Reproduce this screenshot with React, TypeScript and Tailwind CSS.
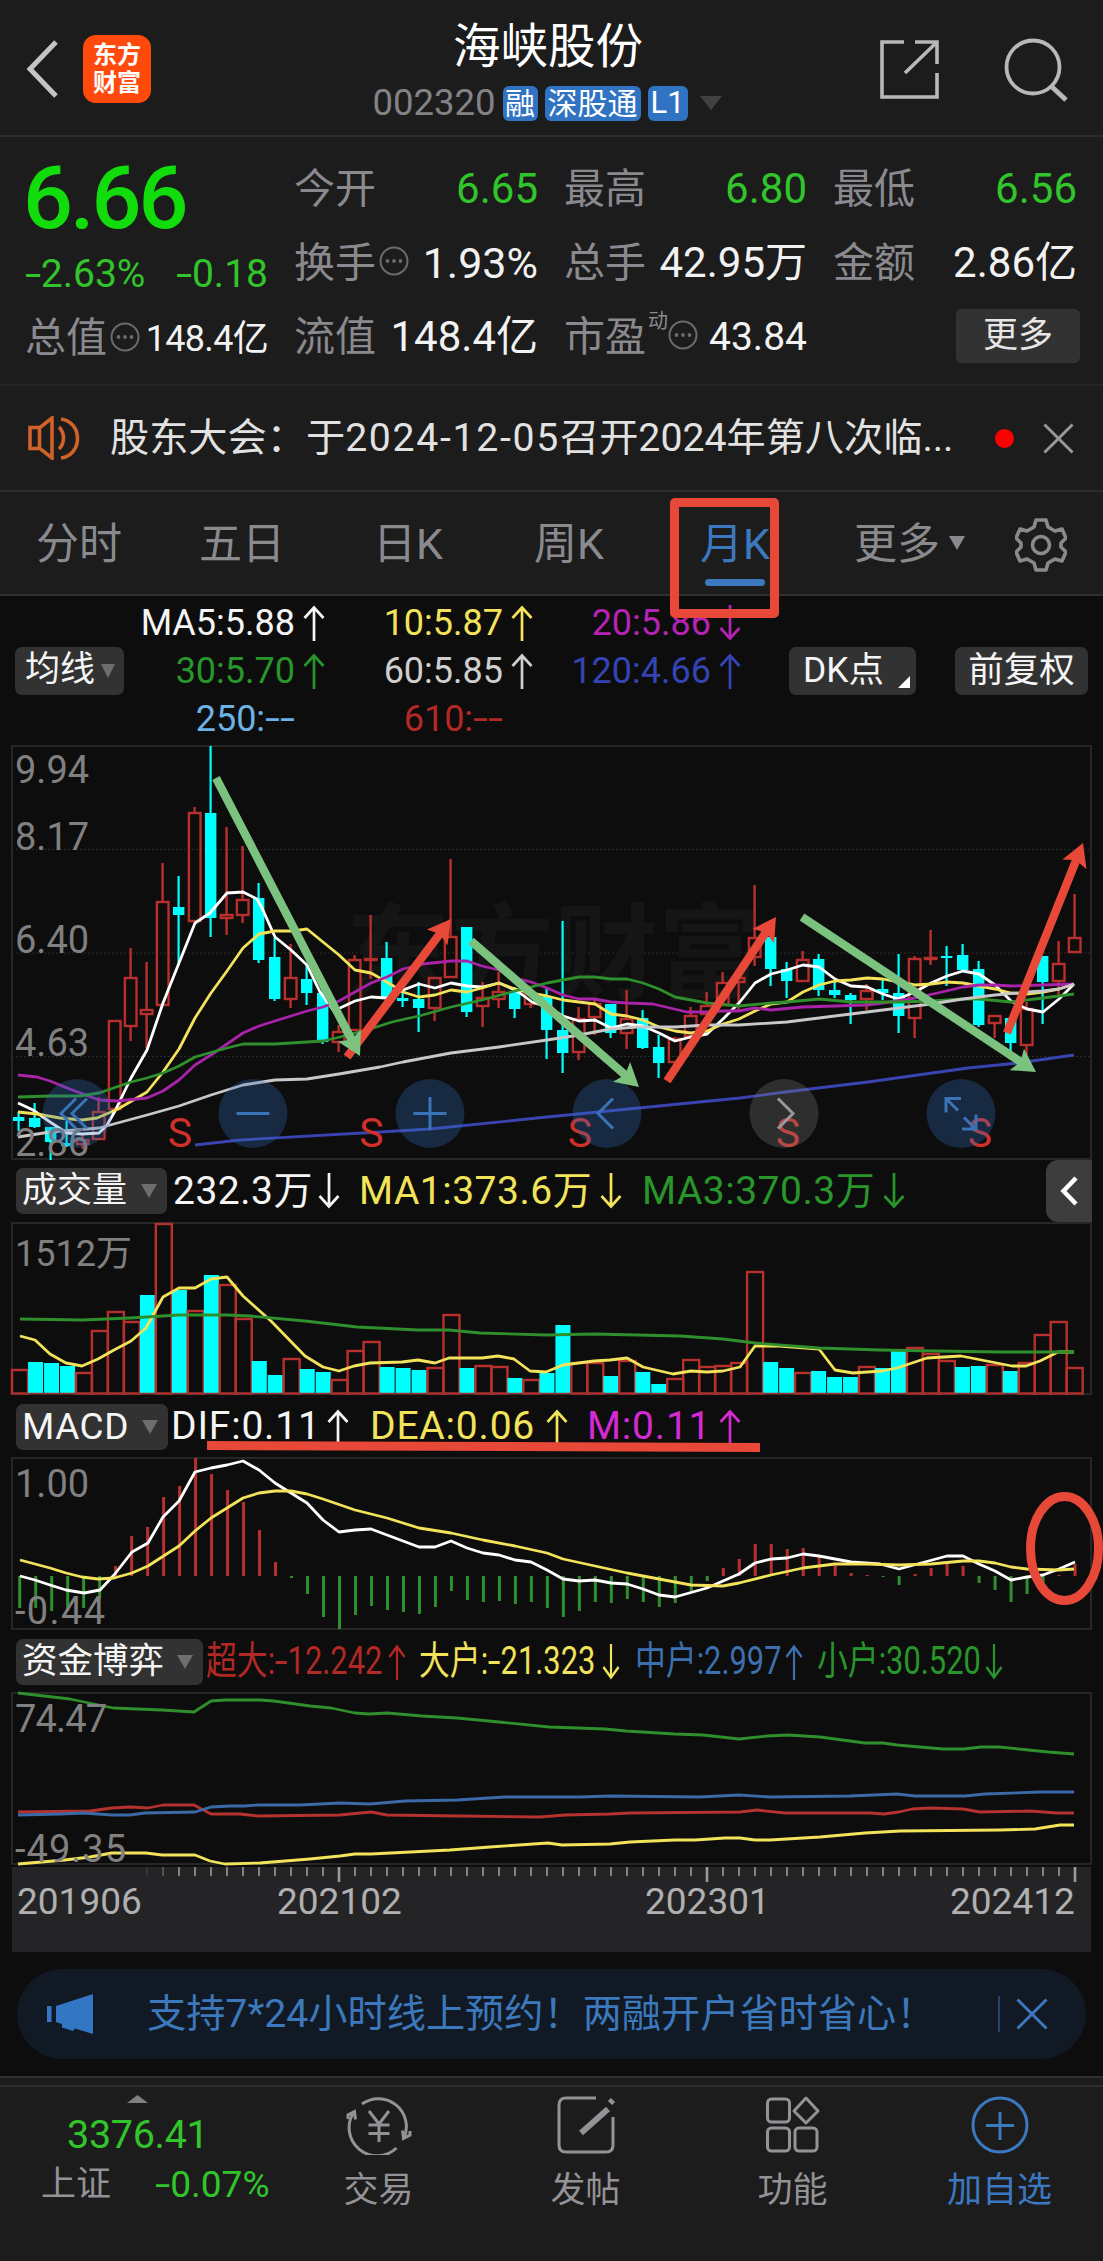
import type { ReactNode } from "react";
import { clsx } from "clsx";

// ── Chart data (y values are in page pixels) ─────────────────────────────

// [dir, high, bodyTop, bodyBottom, low]
type Candle = [1 | -1, number, number, number, number];

const CANDLES: Candle[] = [
  [-1, 1112, 1117, 1121, 1131], [-1, 1103, 1118, 1127, 1128], [-1, 1127, 1127, 1142, 1160],
  [-1, 1120, 1143, 1146, 1147], [1, 1135, 1139, 1145, 1149], [1, 1097, 1111, 1140, 1140],
  [1, 1020, 1020, 1110, 1110], [1, 948, 977, 1027, 1041], [1, 962, 1009, 1015, 1048],
  [1, 863, 901, 1006, 1006], [-1, 876, 907, 915, 965], [1, 807, 812, 922, 922],
  [-1, 746, 813, 918, 937], [1, 827, 914, 919, 935], [1, 846, 899, 916, 923],
  [-1, 883, 898, 960, 963], [-1, 938, 957, 999, 1001], [1, 944, 977, 1000, 1008],
  [-1, 965, 979, 993, 1005], [-1, 988, 993, 1042, 1044], [1, 1025, 1031, 1043, 1052],
  [1, 955, 959, 1031, 1031], [1, 915, 958, 961, 979], [-1, 942, 958, 997, 997],
  [-1, 992, 998, 1001, 1007], [-1, 982, 999, 1008, 1032], [1, 977, 977, 1009, 1021],
  [1, 859, 936, 978, 978], [-1, 927, 927, 1012, 1017], [1, 982, 997, 1007, 1027],
  [1, 972, 991, 1000, 1008], [-1, 987, 992, 1009, 1018], [1, 990, 993, 1005, 1008],
  [-1, 987, 997, 1030, 1059], [-1, 921, 1030, 1053, 1073], [1, 1007, 1018, 1053, 1060],
  [1, 1000, 1003, 1018, 1035], [-1, 1004, 1004, 1033, 1038], [1, 990, 1018, 1034, 1049],
  [-1, 1010, 1018, 1048, 1049], [-1, 1035, 1047, 1063, 1078], [1, 1037, 1038, 1063, 1063],
  [1, 1007, 1015, 1037, 1037], [1, 992, 1005, 1015, 1015], [1, 972, 982, 1006, 1006],
  [1, 975, 977, 983, 1010], [1, 885, 937, 958, 966], [-1, 937, 937, 969, 986],
  [-1, 962, 969, 981, 998], [1, 951, 959, 982, 982], [-1, 954, 959, 990, 996],
  [-1, 981, 990, 995, 998], [-1, 993, 995, 1000, 1024], [1, 984, 990, 1000, 1010],
  [-1, 979, 989, 993, 1000], [-1, 954, 993, 1016, 1033], [1, 956, 958, 1019, 1038],
  [1, 930, 957, 960, 965], [-1, 946, 956, 958, 986], [-1, 944, 955, 970, 970],
  [-1, 961, 969, 1025, 1027], [1, 1015, 1015, 1024, 1038], [-1, 1018, 1018, 1043, 1053],
  [1, 1002, 1008, 1046, 1055], [-1, 956, 956, 982, 1024], [1, 941, 963, 982, 995],
  [1, 894, 937, 953, 953],
];

const MA5 =
  "18,1103 33,1110 50,1122 67,1133 82,1134 99,1133 107,1125 115,1111 131,1078 147,1050 163,1003 179,963 195,923 210,913 227,893 243,892 257,899 262,908 275,937 291,950 307,965 320,992 333,1010 340,1008 355,1001 371,997 387,998 403,990 419,984 435,988 451,983 467,986 482,987 499,983 515,990 520,993 532,1002 547,1007 563,1016 579,1021 595,1020 611,1028 627,1024 643,1026 659,1033 675,1041 691,1037 707,1034 723,1019 739,1003 755,983 771,974 787,970 803,965 819,967 835,979 851,986 867,987 883,994 898,999 915,992 931,983 947,976 963,971 979,974 995,985 1011,1001 1027,1009 1043,1012 1059,999 1074,984";
const MA10 =
  "18,1112 37,1114 60,1118 82,1120 97,1118 118,1109 147,1092 163,1072 179,1049 195,1018 211,993 227,971 243,948 259,934 275,931 293,931 307,929 323,942 339,955 355,970 371,973 387,982 403,992 419,997 435,995 451,990 467,992 482,988 499,983 515,989 530,993 547,996 563,1000 579,1002 595,1004 611,1014 627,1016 643,1020 659,1027 675,1031 691,1033 707,1031 723,1024 739,1019 755,1011 771,1004 787,1002 803,992 819,985 835,981 851,980 867,978 883,979 898,982 915,985 931,984 947,982 963,983 979,986 995,989 1011,993 1027,994 1043,992 1059,989 1074,984";
const MA20 =
  "18,1075 37,1077 50,1081 67,1088 83,1094 99,1100 117,1101 147,1098 163,1091 179,1080 195,1065 211,1055 227,1044 243,1033 259,1026 291,1016 307,1011 323,1007 339,1001 355,992 371,983 387,977 403,969 423,964 451,961 467,961 482,966 499,970 515,978 531,982 547,988 563,995 579,999 595,999 611,1002 627,1003 653,1004 670,1008 687,1012 707,1012 723,1011 739,1011 755,1008 771,1010 803,1007 835,1006 867,1005 883,1003 915,998 942,992 963,987 979,985 995,985 1011,986 1043,985 1074,984";
const MA30 =
  "18,1097 50,1096 80,1096 99,1093 131,1082 147,1078 163,1073 179,1066 195,1057 227,1048 243,1044 275,1044 323,1041 340,1037 370,1029 392,1022 419,1016 451,1007 482,1000 515,991 547,983 579,977 595,977 611,979 627,979 643,983 659,989 675,997 691,1000 707,1003 739,1006 771,1003 787,1002 819,999 851,1002 898,1002 931,1001 963,999 979,999 1011,1002 1043,998 1074,994";
const MA60 =
  "18,1137 50,1132 99,1128 147,1115 179,1106 211,1095 243,1085 275,1080 307,1079 339,1074 380,1067 403,1062 451,1053 499,1047 547,1040 579,1035 611,1029 637,1027 675,1027 707,1025 739,1025 787,1022 819,1018 851,1014 883,1010 931,1004 963,999 995,995 1027,992 1043,991 1059,989 1074,984";
const MA120 =
  "195,1145 240,1140 380,1132 430,1129 547,1117 659,1106 740,1098 785,1092 868,1082 968,1068 1018,1063 1074,1055";

// negative = falling month
const VOLUMES = [
  24, -31, -30, -27, 21, 63, 82, 72, -98, 170, -103, 83, -118, 109, 75, -32, -18, 35, -24, -21, 14, 43, 52,
  -26, -25, -23, 26, 79, -25, 28, 27, -15, 14, -20, -68, 31, 31, -17, 33, -21, -9, 15, 34, 27, 28, 31, 122,
  -31, -25, 21, -22, -16, -16, 27, -25, -42, 46, 40, 33, -26, -27, 29, -22, 31, 59, 72, 26,
];
const VOL_MA1 =
  "20,1336 35,1340 50,1354 66,1363 82,1366 98,1359 114,1350 131,1341 146,1328 163,1297 179,1288 195,1288 211,1279 227,1277 243,1296 271,1321 305,1356 323,1367 339,1371 354,1366 370,1363 402,1362 418,1360 435,1363 449,1358 482,1358 498,1356 514,1359 530,1371 546,1372 563,1365 594,1361 610,1360 627,1358 643,1367 673,1374 691,1371 707,1372 723,1371 740,1367 755,1346 779,1346 819,1349 835,1370 853,1373 882,1371 897,1368 927,1358 961,1356 1012,1366 1026,1366 1040,1361 1058,1352 1074,1352";
const VOL_MA3 =
  "20,1319 82,1320 130,1318 179,1315 227,1315 250,1316 305,1321 357,1327 418,1330 449,1330 480,1333 546,1335 594,1334 680,1336 723,1339 755,1343 819,1348 880,1350 935,1351 1000,1352 1074,1352";

const MACD_BARS = [
  -32, -32, -35, -35, -32, -22, 10, 40, 49, 79, 90, 118, 102, 86, 74, 46, 14, -2, -18, -41, -53, -39, -30,
  -34, -36, -38, -31, -15, -24, -26, -25, -28, -26, -32, -41, -35, -26, -27, -23, -26, -31, -27, -15, -5, 8,
  17, 32, 32, 27, 28, 19, 11, 3, 1, -1, -9, 2, 8, 13, 10, -7, -14, -26, -18, -8, 1, 12,
];
const DIF =
  "20,1576 35,1580 50,1585 66,1590 84,1593 100,1590 114,1575 132,1552 148,1543 163,1517 179,1501 195,1472 211,1468 227,1465 243,1461 259,1470 275,1483 291,1493 307,1503 323,1520 339,1532 355,1530 371,1529 387,1535 403,1541 419,1547 435,1547 451,1541 467,1548 483,1553 499,1555 515,1560 531,1562 547,1570 563,1579 579,1581 595,1580 611,1583 627,1584 643,1589 659,1595 675,1597 707,1588 739,1574 755,1563 771,1559 787,1558 803,1554 819,1556 851,1562 880,1564 899,1569 947,1556 963,1556 979,1564 995,1571 1011,1580 1027,1577 1043,1575 1059,1569 1075,1562";
const DEA =
  "20,1560 35,1564 50,1568 66,1573 82,1577 98,1579 114,1578 132,1573 148,1566 179,1546 195,1531 211,1518 227,1508 243,1498 259,1493 275,1491 291,1491 307,1494 323,1499 355,1510 387,1518 419,1528 451,1533 483,1540 515,1546 547,1553 563,1559 595,1566 627,1573 659,1579 691,1585 723,1586 739,1583 771,1575 803,1568 835,1564 867,1564 899,1565 931,1564 963,1561 979,1561 995,1563 1011,1567 1027,1569 1059,1570 1074,1569";

const FUND_SMALL =
  "18,1693 70,1699 113,1708 162,1710 194,1712 211,1701 225,1700 260,1700 274,1701 310,1706 331,1708 355,1713 369,1714 387,1713 422,1716 457,1718 499,1722 549,1727 605,1729 626,1731 675,1734 703,1735 739,1739 767,1736 788,1735 820,1737 865,1743 883,1743 897,1745 943,1749 964,1749 981,1747 999,1747 1048,1752 1074,1754";
const FUND_MID =
  "18,1815 60,1814 84,1813 112,1815 130,1815 145,1813 195,1812 211,1807 230,1806 245,1806 258,1805 300,1805 340,1803 370,1804 405,1801 457,1800 505,1797 580,1797 610,1796 700,1797 739,1795 770,1797 850,1796 897,1794 915,1796 965,1796 985,1794 1040,1792 1074,1792";
const FUND_HUGE =
  "18,1812 90,1811 112,1808 130,1807 148,1808 163,1805 194,1805 211,1814 240,1814 258,1816 340,1815 371,1812 387,1815 460,1816 540,1817 565,1815 610,1814 630,1813 740,1812 757,1810 785,1813 870,1813 884,1814 899,1812 912,1809 930,1808 963,1809 980,1812 1030,1811 1057,1813 1074,1813";
const FUND_BIG =
  "18,1864 65,1860 90,1857 112,1853 146,1853 162,1855 195,1855 210,1861 225,1864 260,1863 310,1859 340,1856 355,1854 371,1854 450,1850 490,1847 548,1843 562,1845 610,1844 630,1842 675,1840 695,1840 725,1838 740,1838 755,1840 770,1840 820,1837 865,1833 900,1831 1000,1830 1035,1829 1060,1825 1074,1825";

const RED = "#b8302d";
const CYAN = "#00ffff";
const GREEN = "#2f8f2c";
const YELLOW = "#f3e35a";

// ── Small pieces ─────────────────────────────────────────────────────────

function Line({ points, color, width = 2.8 }: { points: string; color: string; width?: number }) {
  return <polyline points={points} fill="none" stroke={color} strokeWidth={width} strokeLinejoin="round" />;
}

// Roboto's hyphen is too short next to the figures, so it is stretched
function Minus() {
  return <span className="mr-[5px] inline-block origin-left scale-x-150">-</span>;
}

function Trend({ dir }: { dir: "up" | "down" }) {
  return (
    <svg
      width="22"
      height="36"
      viewBox="0 0 22 36"
      className={clsx("shrink-0", dir === "down" && "rotate-180")}
      fill="none"
      stroke="currentColor"
      strokeWidth="2.7"
    >
      <path d="M11 36V3M1.5 13 11 2.5 20.5 13" />
    </svg>
  );
}

function Caret({ className }: { className?: string }) {
  return (
    <svg width="16" height="14" viewBox="0 0 16 14" preserveAspectRatio="none" className={className} fill="currentColor">
      <path d="M0 0h16L8 14z" />
    </svg>
  );
}

function Dots() {
  return (
    <svg width="30" height="30" viewBox="0 0 30 30" className="mb-1 ml-[3px] shrink-0 text-[#6b6b6f]">
      <circle cx="15" cy="15" r="13.500" fill="none" stroke="currentColor" strokeWidth="2" />
      <g fill="currentColor">
        <circle cx="8.500" cy="15" r="1.900" />
        <circle cx="15" cy="15" r="1.900" />
        <circle cx="21.500" cy="15" r="1.900" />
      </g>
    </svg>
  );
}

function Close({ size, className }: { size: number; className?: string }) {
  return (
    <svg width={size} height={size} viewBox="0 0 32 32" className={className} stroke="currentColor" strokeWidth="3">
      <path d="M1.500 1.500l29 29M30.500 1.500l-29 29" />
    </svg>
  );
}

function Stat({ label, value, valueClass, icon, sup }: {
  label: string;
  value: string;
  valueClass: string;
  icon?: boolean;
  sup?: string;
}) {
  return (
    <div className="flex h-[52px] items-center justify-between leading-[52px]">
      <span className="flex items-center text-[41px] text-[#8a8a8e]">
        {label}
        {sup && <sup className="-mr-[3px] ml-0.5 self-start text-[20px] leading-[20px] top-0">{sup}</sup>}
        {icon && <Dots />}
      </span>
      <span className={valueClass}>{value}</span>
    </div>
  );
}

function Picker({ label, className }: { label: string; className: string }) {
  return (
    <div className={clsx("flex h-[46px] shrink-0 items-center justify-between rounded-[7px] bg-[#323232] pl-1.5 pr-2.5 text-[#f5f5f5]", className)}>
      <span>{label}</span>
      <Caret className="text-[#6e6e6e]" />
    </div>
  );
}

// ── Sections ─────────────────────────────────────────────────────────────

function Header() {
  return (
    <header className="flex h-[137px] items-start justify-between border-b-2 border-[#2c2c2c] pl-[26px] pr-[35px]">
      <div className="flex w-[340px] items-center gap-[24px] pt-[35px]">
        <svg width="33" height="58" viewBox="0 0 33 58" fill="none" stroke="#c4c4c4" strokeWidth="5">
          <path d="M30 2 4 29l26 27" />
        </svg>
        <div className="flex size-[68px] flex-col items-center justify-center rounded-[13px] bg-[#ff4a0c] text-[24px] font-bold leading-[28px] text-white">
          <span>东方</span>
          <span>财富</span>
        </div>
      </div>
      <div className="flex flex-col items-center pt-[18px]">
        <h1 className="ml-[2px] text-[47.500px] leading-[58px] text-white">海峡股份</h1>
        <div className="mt-[9px] flex items-center gap-[7px] text-white">
          <span className="text-[36.500px] leading-9 text-[#838387]">002320</span>
          <span className="flex h-[35px] w-[35px] items-center justify-center rounded-[6px] bg-[#3173c3] text-[30px]">融</span>
          <span className="flex h-[35px] w-[96px] items-center justify-center rounded-[6px] bg-[#3173c3] text-[30px]">深股通</span>
          <span className="flex h-[35px] w-[40px] items-center justify-center rounded-[6px] bg-[#3173c3] text-[31px]">L1</span>
          <Caret className="ml-[5px] w-[22px] text-[#414141]" />
        </div>
      </div>
      <div className="flex w-[340px] justify-end gap-[63px] pt-[38px] text-[#b8b8b8]">
        <svg width="62" height="62" viewBox="0 0 62 62" fill="none" stroke="currentColor" strokeWidth="3.600">
          <path d="M25 4H3v55h55V35M36 4h22v22M58 4 26 35" />
        </svg>
        <svg width="64" height="66" viewBox="0 0 64 66" fill="none" stroke="currentColor" strokeWidth="3.800">
          <circle cx="29" cy="29" r="26.500" />
          <path d="m47 48 15 14" strokeWidth="5" />
        </svg>
      </div>
    </header>
  );
}

function Quote() {
  const green = "text-[42px] text-[#32c52b]";
  const white = "text-[42px] text-[#f2f2f2]";
  return (
    <section className="grid h-[249px] grid-cols-[243px_244px_243px_244px] gap-x-[26px] border-b-2 border-[#252525] pl-[25px]">
      <div className="flex flex-col">
        <div className="-ml-[2px] mt-[18px] h-[86px] text-[88px] font-medium leading-[86px] tracking-[-3px] text-[#12dc0c]">6.66</div>
        <div className="mt-[9px] flex h-[48px] items-center justify-between text-[39px] text-[#32c52b]">
          <span><Minus />2.63%</span>
          <span><Minus />0.18</span>
        </div>
        <div className="mt-[15px] flex h-[52px] items-center justify-between">
          <span className="flex items-center text-[41px] text-[#8a8a8e]">总值<Dots /></span>
          <span className="text-[36px] tracking-[-0.700px] text-[#f2f2f2]">148.4亿</span>
        </div>
      </div>
      <div className="flex flex-col gap-[22px] pt-[26px]">
        <Stat label="今开" value="6.65" valueClass={green} />
        <Stat label="换手" value="1.93%" valueClass="text-[43px] text-[#f2f2f2]" icon />
        <Stat label="流值" value="148.4亿" valueClass={white} />
      </div>
      <div className="flex flex-col gap-[22px] pt-[26px]">
        <Stat label="最高" value="6.80" valueClass={green} />
        <Stat label="总手" value="42.95万" valueClass={white} />
        <Stat label="市盈" value="43.84" valueClass="text-[39px] text-[#f2f2f2]" icon sup="动" />
      </div>
      <div className="flex flex-col gap-[22px] pt-[26px]">
        <Stat label="最低" value="6.56" valueClass={green} />
        <Stat label="金额" value="2.86亿" valueClass={white} />
        <button className="-mr-[3px] -mt-[2px] h-[54px] w-[124px] self-end rounded-[6px] bg-[#323232] text-[35px] leading-[52px] text-[#e6e6e6]">更多</button>
      </div>
    </section>
  );
}

function Notice() {
  return (
    <section className="flex h-[106px] items-center border-b-2 border-[#2c2c2c] pl-[28px] pr-[29px]">
      <svg width="52" height="44" viewBox="0 0 52 44" fill="none" stroke="#d0622a" strokeWidth="3.600">
        <path d="M2 11.500h10L24 2v40L12 32.500H2zM11.500 12v20M31 11c6 6 6 16 0 22M33 3c22 3 22 36 0 39" />
      </svg>
      <p className="ml-[30px] w-[855px] whitespace-nowrap text-[39.200px] text-[#e2e2e2]">
        股东大会：于<span className="tracking-[1.700px]">2024-12-05</span>召开2024年第八次临...
      </p>
      <span className="ml-auto size-[19px] rounded-full bg-[#fb0101]" />
      <Close size={31} className="ml-[29px] text-[#98989c]" />
    </section>
  );
}

function Gear() {
  return (
    <svg width="52" height="54" viewBox="0 0 52 54" fill="none" stroke="#8a8a8e" strokeWidth="3.600" strokeLinejoin="round">
      <path d="M21 2h10l2 7 7 4 7-2 4 9-5 5v4l5 5-4 9-7-2-7 4-2 7H21l-2-7-7-4-7 2-4-9 5-5v-4l-5-5 4-9 7 2 7-4z" />
      <circle cx="26" cy="27" r="8.500" />
    </svg>
  );
}

function Tabs() {
  return (
    <nav className="relative flex h-[104px] items-center border-b-2 border-[#303030] pl-[36px] pt-[3px] text-[43px] text-[#8a8a8e]">
      <span className="w-[163px]">分时</span>
      <span className="w-[174px]">五日</span>
      <span className="w-[161px]">日K</span>
      <span className="w-[166px]">周K</span>
      <span className="relative w-[154px] text-[#3c78c0]">
        月K
        <i className="absolute -bottom-[9px] left-[5px] h-[7px] w-[60px] rounded-full bg-[#3c78c0]" />
      </span>
      <span className="flex w-[161px] items-center gap-[9px]">
        更多
        <Caret className="mb-1" />
      </span>
      <Gear />
      {/* highlight frame round the active tab */}
      <div className="absolute left-[670px] top-[6px] z-10 h-[120px] w-[109px] rounded-[5px] border-9 border-[#e84838]" />
    </nav>
  );
}

function Ma({ color, children, dir }: { color: string; children: ReactNode; dir?: "up" | "down" }) {
  return (
    <div className={clsx("flex h-[48px] items-center justify-end gap-[8px]", color)}>
      <span>{children}</span>
      {dir ? <Trend dir={dir} /> : <span className="w-[22px]" />}
    </div>
  );
}

function MaBar() {
  return (
    <section className="flex h-[149px] items-center pl-[15px] pr-[15px] text-[36px]">
      <div className="flex h-[48px] w-[109px] items-center justify-between rounded-[7px] bg-[#323232] pl-[10px] pr-[9px] text-[35px] text-[#f5f5f5]">
        均线
        <Caret className="w-[14px] text-[#6e6e6e]" />
      </div>
      <div className="grid w-[617px] grid-cols-[201px_208px_208px]">
        <Ma color="text-[#f5f5f5]" dir="up">MA5:5.88</Ma>
        <Ma color="text-[#f3e35a]" dir="up">10:5.87</Ma>
        <Ma color="text-[#b623b4]" dir="down">20:5.86</Ma>
        <Ma color="text-[#28962a]" dir="up">30:5.70</Ma>
        <Ma color="text-[#cfcfcf]" dir="up">60:5.85</Ma>
        <Ma color="text-[#3444b4]" dir="up">120:4.66</Ma>
        <Ma color="text-[#6cb2e4]">250:<Minus /><Minus /></Ma>
        <Ma color="text-[#b22824]">610:<Minus /><Minus /></Ma>
      </div>
      <div className="relative ml-auto flex h-[48px] w-[127px] items-center rounded-[7px] bg-[#323232] pl-[14px] text-[35.500px] text-[#f5f5f5]">
        DK点
        <svg width="12" height="12" viewBox="0 0 12 12" className="absolute bottom-[7px] right-[6px]">
          <path d="M12 0v12H0z" fill="#fff" />
        </svg>
      </div>
      <div className="ml-[39px] flex h-[48px] w-[133px] items-center justify-center rounded-[7px] bg-[#323232] text-[35.500px] text-[#f5f5f5]">
        前复权
      </div>
    </section>
  );
}

const ARROWS = [
  { from: [347, 1057], to: [451, 919], color: "#e84838" },
  { from: [216, 778], to: [360, 1056], color: "#7bc27f" },
  { from: [471, 941], to: [639, 1087], color: "#7bc27f" },
  { from: [667, 1081], to: [776, 917], color: "#e84838" },
  { from: [802, 917], to: [1036, 1072], color: "#7bc27f" },
  { from: [1007, 1033], to: [1083, 843], color: "#e84838" },
];

function Arrow({ from, to, color }: { from: number[]; to: number[]; color: string }) {
  const dx = to[0] - from[0];
  const dy = to[1] - from[1];
  const len = Math.hypot(dx, dy);
  const angle = (Math.atan2(dy, dx) * 180) / Math.PI;
  return (
    <path
      d={`M0 -4.200H${len - 20}L${len - 23} -13L${len} 0L${len - 23} 13L${len - 20} 4.200H0Z`}
      fill={color}
      transform={`translate(${from[0]} ${from[1]}) rotate(${angle})`}
    />
  );
}

const ROUND_BUTTONS = [
  { x: 77, d: "M-1 -15l-15 15l15 15M10 -15l-15 15l15 15" },
  { x: 253, d: "M-16.500 0h33" },
  { x: 430, d: "M-16.500 0h33M0 -16.500v33" },
  { x: 607, d: "M6 -15l-15 15l15 15" },
  { x: 784, d: "M-6 -15l15 15l-15 15", gray: true },
  { x: 961, d: "M-3 -3l-12 -12M-15 -1v-14h15M3 4l12 12M15 1v14.500h-14" },
];

function KChart() {
  return (
    <svg width="1103" height="415" viewBox="0 745 1103 415" className="block overflow-visible">
      <rect x="12" y="746" width="1079" height="413" fill="none" stroke="#262626" strokeWidth="2" />
      {[849.5, 953, 1056.5].map((y) => (
        <path key={y} d={`M12 ${y}H1090`} stroke="#2a2a2a" strokeWidth="1.200" strokeDasharray="2 2" />
      ))}
      <text x="346" y="991" fontSize="104" fontWeight="700" fill="#151515">东方财富</text>

      {CANDLES.map(([dir, high, top, bottom, low], i) => {
        const x = 18.6 + i * 16;
        return dir === -1 ? (
          <g key={i} fill={CYAN}>
            <rect x={x - 1.1} y={high} width="2.200" height={low - high} />
            <rect x={x - 5.6} y={top} width="11.400" height={bottom - top} />
          </g>
        ) : (
          <g key={i} fill="none" stroke={RED} strokeWidth="2.400">
            <path d={`M${x} ${high}V${top}M${x} ${bottom}V${low}`} />
            <rect x={x - 5.7} y={top + 1} width="11.600" height={Math.max(bottom - top - 2, 1)} />
          </g>
        );
      })}

      <Line points={MA5} color="#ffffff" />
      <Line points={MA10} color={YELLOW} />
      <Line points={MA20} color="#a823a8" />
      <Line points={MA30} color={GREEN} />
      <Line points={MA60} color="#c8c8c8" />
      <Line points={MA120} color="#3a44b0" />

      <g fontSize="38" fill="#808080">
        <text x="15" y="783">9.94</text>
        <text x="15" y="850">8.17</text>
        <text x="15" y="953">6.40</text>
        <text x="15" y="1056">4.63</text>
        <text x="15" y="1156">2.86</text>
      </g>
      <g fontSize="41" fill="#cf302c" textAnchor="middle">
        {[180, 371.5, 580, 788, 980].map((x) => (
          <text key={x} x={x} y="1147">S</text>
        ))}
      </g>
      {ROUND_BUTTONS.map(({ x, d, gray }) => (
        <g key={x} transform={`translate(${x} 1113.5)`}>
          <circle r="34.500" fill={gray ? "#808080" : "#3070c0"} fillOpacity="0.29" />
          <path d={d} fill="none" stroke={gray ? "#98989c" : "#3a74b8"} strokeWidth="3" />
        </g>
      ))}
      {ARROWS.map((a) => (
        <Arrow key={a.to[0]} {...a} />
      ))}
    </svg>
  );
}

function VolumePanel() {
  return (
    <section>
      <div className="flex h-[62px] items-center pl-4 pr-[11px] text-[39px] tracking-[0.500px]">
        <Picker label="成交量" className="w-[151px] text-[35px] tracking-normal" />
        <span className="ml-[6px] w-[145px] text-[#f5f5f5]">232.3万</span>
        <span className="text-[#f5f5f5]"><Trend dir="down" /></span>
        <span className="ml-[19px] w-[241px] text-[#f3e35a]">MA1:373.6万</span>
        <span className="text-[#f3e35a]"><Trend dir="down" /></span>
        <span className="ml-[20px] w-[241px] text-[#28962a]">MA3:370.3万</span>
        <span className="text-[#28962a]"><Trend dir="down" /></span>
        <div className="ml-auto flex h-[62px] w-[46px] items-center justify-center rounded-l-[12px] bg-[#3d3d3d]">
          <svg width="18" height="30" viewBox="0 0 18 30" fill="none" stroke="#fff" strokeWidth="4.500">
            <path d="M16 2 3.500 15 16 28" />
          </svg>
        </div>
      </div>
      <svg width="1103" height="174" viewBox="0 1222 1103 174" className="block overflow-visible">
        <rect x="12" y="1223" width="1079" height="171" fill="none" stroke="#262626" strokeWidth="2" />
        {VOLUMES.map((v, i) => {
          const h = Math.abs(v);
          return v < 0 ? (
            <rect key={i} x={12.1 + i * 15.98} y={1393 - h} width="15" height={h} fill={CYAN} />
          ) : (
            <rect key={i} x={12 + i * 15.98} y={1394 - h} width="16" height={h - 0.5} fill="none" stroke={RED} strokeWidth="2.400" />
          );
        })}
        <path d="M12 1393.500H1084" stroke="#9c3333" strokeWidth="1.500" />
        <Line points={VOL_MA1} color={YELLOW} />
        <Line points={VOL_MA3} color={GREEN} />
        <text x="15" y="1266" fontSize="36" fill="#808080">1512万</text>
      </svg>
    </section>
  );
}

function MacdPanel() {
  return (
    <section className="relative">
      <div className="flex h-[61px] items-center pl-4 text-[39px] tracking-[0.800px]">
        <Picker label="MACD" className="w-[152px] text-[37px] tracking-[0.500px]" />
        <span className="ml-[3px] w-[156px] text-[#f5f5f5]">DIF:0.11</span>
        <span className="text-[#f5f5f5]"><Trend dir="up" /></span>
        <span className="ml-[21px] w-[176px] text-[#f3e35a]">DEA:0.06</span>
        <span className="text-[#f3e35a]"><Trend dir="up" /></span>
        <span className="ml-[19px] w-[132px] text-[#d42ad2]">M:0.11</span>
        <span className="text-[#d42ad2]"><Trend dir="up" /></span>
      </div>
      <svg width="1103" height="174" viewBox="0 1457 1103 174" className="block overflow-visible">
        <rect x="12" y="1458" width="1079" height="171" fill="none" stroke="#262626" strokeWidth="2" />
        {MACD_BARS.map((v, i) => (
          <rect
            key={i}
            x={18.2 + i * 15.99}
            y={v > 0 ? 1576 - v : 1576}
            width="3"
            height={Math.abs(v)}
            fill={v > 0 ? RED : GREEN}
          />
        ))}
        <Line points={DIF} color="#ffffff" />
        <Line points={DEA} color={YELLOW} />
        <g fontSize="38" fill="#808080">
          <text x="15" y="1497">1.00</text>
          <text x="15" y="1624" textLength="90">-0.44</text>
        </g>
      </svg>
      {/* marker strokes: underline and ring */}
      <svg width="1103" height="235" viewBox="0 1396 1103 235" className="pointer-events-none absolute left-0 top-0">
        <path d="M207 1445.500 760 1447.500" stroke="#e84838" strokeWidth="9" />
        <ellipse cx="1064.500" cy="1548.500" rx="34" ry="52" fill="none" stroke="#e84838" strokeWidth="9" />
      </svg>
    </section>
  );
}

function FundItem({ label, value, dir, className, width }: {
  label: string;
  value: ReactNode;
  dir: "up" | "down";
  className: string;
  width: string;
}) {
  return (
    <div className={clsx("flex items-center", className)}>
      <span className={clsx("whitespace-nowrap", width)}>
        <span className="inline-block origin-left scale-x-[0.79]">{label}:{value}</span>
      </span>
      <span className="scale-x-[0.8]"><Trend dir={dir} /></span>
    </div>
  );
}

function FundPanel() {
  return (
    <section>
      <div className="flex h-[61px] items-center pl-4 text-[39px]">
        <Picker label="资金博弈" className="w-[187px] text-[35.500px]" />
        <FundItem label="超大" value={<><Minus />12.242</>} dir="up" className="ml-[3px] text-[#b22824]" width="w-[180px]" />
        <FundItem label="大户" value={<><Minus />21.323</>} dir="down" className="ml-[11px] text-[#f3e35a]" width="w-[181px]" />
        <FundItem label="中户" value="2.997" dir="up" className="ml-[13px] text-[#3c70b0]" width="w-[148px]" />
        <FundItem label="小户" value="30.520" dir="down" className="ml-[12px] text-[#28962a]" width="w-[166px]" />
      </div>
      <svg width="1103" height="175" viewBox="0 1692 1103 175" className="block overflow-visible">
        <rect x="12" y="1693" width="1079" height="171" fill="none" stroke="#262626" strokeWidth="2" />
        <Line points={FUND_HUGE} color="#b53230" />
        <Line points={FUND_MID} color="#3c6aa8" />
        <Line points={FUND_BIG} color={YELLOW} />
        <Line points={FUND_SMALL} color={GREEN} />
        <g fontSize="38" fill="#808080">
          <text x="15" y="1732" textLength="92">74.47</text>
          <text x="15" y="1862" textLength="111">-49.35</text>
        </g>
      </svg>
    </section>
  );
}

function TimeAxis() {
  const ticks = Array.from({ length: 59 }, (_, i) => 147 + i * 16);
  return (
    <div className="mx-3 h-[85px] bg-[#242426]">
      <svg width="1079" height="16" viewBox="12 0 1079 16" className="block" stroke="#9a9a9a">
        {ticks.map((x, i) => {
          const major = x === 339 || x === 707 || x === 1075;
          return (
            <path
              key={x}
              d={`M${x} 0V${major ? 15 : 9}`}
              strokeWidth={major ? 2.6 : 1.6}
              strokeOpacity={i === 0 ? 0.2 : i === 1 ? 0.5 : 1}
            />
          );
        })}
      </svg>
      <div className="flex h-[38px] items-center pl-[5px] text-[37px] text-[#b0b0b0]">
        <span className="w-[260px]">201906</span>
        <span className="w-[368px]">202102</span>
        <span className="w-[305px]">202301</span>
        <span>202412</span>
      </div>
    </div>
  );
}

function Promo() {
  return (
    <div className="mx-[17px] mt-[17px] flex h-[90px] items-center rounded-full bg-[#111a24] pl-[30px] pr-[38px] text-[#3c78bc]">
      <svg width="46" height="40" viewBox="0 0 46 40" fill="#3377c4">
        <path d="M0 12h4.500v16H0zM9 12 46 0v40L28 34.500l-2 2.500-11-3.500V30l-6-2z" />
      </svg>
      <p className="ml-[54px] whitespace-nowrap text-[39.200px]">支持7*24小时线上预约！两融开户省时省心！</p>
      <span className="ml-auto h-[36px] w-0.5 bg-[#24456c]" />
      <Close size={32} className="ml-[16px]" />
    </div>
  );
}

function NavItem({ label, active, children }: { label: string; active?: boolean; children: ReactNode }) {
  return (
    <div className={clsx("flex w-[207px] flex-col items-center", active ? "text-[#3c78c0]" : "text-[#939397]")}>
      <svg width="66" height="60" viewBox="0 0 66 60" fill="none" stroke="currentColor" strokeWidth="3">
        {children}
      </svg>
      <span className="mt-[13px] text-[35px] leading-[46px]">{label}</span>
    </div>
  );
}

function BottomNav() {
  return (
    <footer className="mt-[17px] h-[185px] border-t-2 border-[#303030] bg-[#1c1c1c]">
      <div className="mt-[7px] flex border-t-2 border-[#2c2c2c]">
        <div className="w-[275px]">
          <Caret className="ml-[127px] mt-[8px] h-2 w-[21px] rotate-180 text-[#808080]" />
          <div className="mt-[9px] pl-[67px] text-[39.500px] leading-[46px] tracking-[-0.300px] text-[#32c52b]">3376.41</div>
          <div className="mt-[4px] flex h-[46px] items-center gap-[44px] pl-[41px]">
            <span className="text-[35px] text-[#939397]">上证</span>
            <span className="text-[37px] text-[#32c52b]"><Minus />0.07%</span>
          </div>
        </div>
        <div className="flex pt-[8px]">
          <NavItem label="交易">
            <path d="M16 9A28 28 0 0 1 58 43M50.500 53A28 28 0 0 1 8 17" />
            <path d="M64 36v4l-6.500 3.500-1-8M2 24v-4l6.500-3.500 1 8" />
            <path d="M23 16l10 13 10-13M33 29v18M22.500 30h21M22.500 38.500h21" />
          </NavItem>
          <NavItem label="发帖">
            <path d="M43 3H13q-7 0-7 7v40q0 7 7 7h40q7 0 7-7V22" />
            <path d="M55 14 28 38" strokeWidth="6" />
            <path d="M57 8l3-3" strokeWidth="6" />
          </NavItem>
          <NavItem label="功能">
            <rect x="7.500" y="4" width="22" height="23" rx="4" />
            <path d="m46 3 12 13-12 12-12-12z" strokeLinejoin="round" />
            <rect x="7.500" y="33" width="22" height="23" rx="4" />
            <rect x="35" y="33" width="22" height="23" rx="4" />
          </NavItem>
          <NavItem label="加自选" active>
            <circle cx="33" cy="30" r="27" />
            <path d="M19 30.500h28M33 17v28" />
          </NavItem>
        </div>
      </div>
    </footer>
  );
}

export default function App() {
  return (
    <div className="w-[1103px] bg-[#0d0d0d] [font-family:Roboto,'Noto_Sans_CJK_SC',sans-serif]">
      <div className="bg-[#1c1c1c]">
        <Header />
        <Quote />
        <Notice />
        <Tabs />
      </div>
      <MaBar />
      <KChart />
      <VolumePanel />
      <MacdPanel />
      <FundPanel />
      <TimeAxis />
      <Promo />
      <BottomNav />
    </div>
  );
}
